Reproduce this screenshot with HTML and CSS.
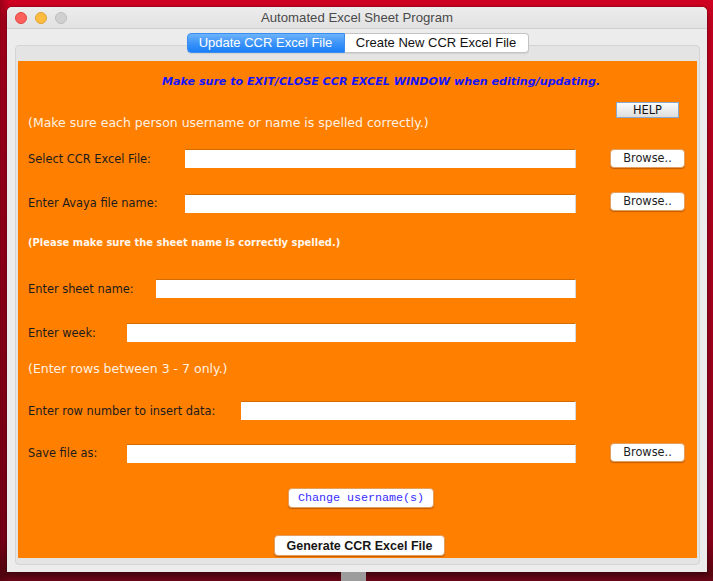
FILE: index.html
```html
<!DOCTYPE html>
<html>
<head>
<meta charset="utf-8">
<title>Automated Excel Sheet Program</title>
<link rel="stylesheet" href="styles.css">
</head>
<body>
<div class="desk">
  <div class="window">
    <div class="titlebar">
      <div class="lights">
        <span class="light red"></span>
        <span class="light yellow"></span>
        <span class="light gray"></span>
      </div>
      <div class="title">Automated Excel Sheet Program</div>
    </div>
    <div class="tabs">
      <div class="tab selected">Update CCR Excel File</div>
      <div class="tab">Create New CCR Excel File</div>
    </div>
    <div class="tabbox">
      <div class="panel">
        <div class="warn">Make sure to EXIT/CLOSE CCR EXCEL WINDOW when editing/updating.</div>
        <div class="helprow"><button class="help">HELP</button></div>
        <div class="note note1">(Make sure each person username or name is spelled correctly.)</div>

        <div class="row r1 w157">
          <span class="label">Select CCR Excel File:</span>
          <span class="field"></span>
          <span class="trail"><button class="browse">Browse..</button></span>
        </div>
        <div class="row r2 w157 tall">
          <span class="label">Enter Avaya file name:</span>
          <span class="field low"></span>
          <span class="trail"><button class="browse high">Browse..</button></span>
        </div>

        <div class="note bold note2">(Please make sure the sheet name is correctly spelled.)</div>

        <div class="row r3 w128">
          <span class="label">Enter sheet name:</span>
          <span class="field"></span>
          <span class="trail"></span>
        </div>
        <div class="row r4 w99">
          <span class="label">Enter week:</span>
          <span class="field"></span>
          <span class="trail"></span>
        </div>

        <div class="note note3">(Enter rows between 3 - 7 only.)</div>

        <div class="row r5 w213">
          <span class="label">Enter row number to insert data:</span>
          <span class="field"></span>
          <span class="trail"></span>
        </div>
        <div class="row r6 w99 mid">
          <span class="label">Save file as:</span>
          <span class="field low"></span>
          <span class="trail"><button class="browse high">Browse..</button></span>
        </div>

        <div class="centerrow change-row"><button class="change">Change username(s)</button></div>
        <div class="centerrow gen-row"><button class="generate">Generate CCR Excel File</button></div>
      </div>
    </div>
  </div>
  <div class="stand"></div>
</div>
</body>
</html>
```

FILE: styles.css
```css
* { box-sizing: border-box; }
html, body { margin: 0; padding: 0; }
body {
  width: 713px;
  height: 581px;
  overflow: hidden;
  font-family: "Liberation Sans", Arial, sans-serif;
  background:
    linear-gradient(90deg, rgba(60,0,10,0.35) 0px, rgba(60,0,10,0) 10px),
    linear-gradient(180deg, #d10022 0px, #c4001f 20px, #a3001c 300px, #8a0019 540px, #5a0712 575px, #6a0818 581px);
}
.desk { position: relative; width: 713px; height: 581px; padding: 7px 6px 0 7px; }
.window {
  width: 700px;
  height: 565px;
  background: #ececec;
  border-radius: 5px 5px 0 0;
  box-shadow: 0 0 0 1px rgba(0,0,0,0.12), 0 2px 6px rgba(0,0,0,0.35);
  display: flex;
  flex-direction: column;
  overflow: hidden;
}
.titlebar {
  height: 22px;
  flex: none;
  background: linear-gradient(180deg, #ececec 0%, #e2e2e2 100%);
  border-bottom: 1px solid #d0d0d0;
  display: flex;
  align-items: center;
  position: relative;
}
.lights { display: flex; gap: 8px; padding-left: 8px; }
.light { width: 12px; height: 12px; border-radius: 50%; display: block; }
.light.red { background: #fc605c; border: 1px solid #e2463f; }
.light.yellow { background: #fdbc40; border: 1px solid #dea236; }
.light.gray { background: #d0d0d0; border: 1px solid #bdbdbd; }
.title {
  position: absolute;
  left: 0; right: 0; top: 0; bottom: 0;
  text-align: center;
  line-height: 22px;
  font-size: 13.2px;
  color: #4a4a4a;
}
.tabs {
  display: flex;
  justify-content: center;
  margin-top: 4px;
  margin-bottom: -8px;
  position: relative;
  z-index: 2;
  padding-left: 1px;
}
.tab {
  height: 20px;
  line-height: 18px;
  font-size: 13px;
  border: 1px solid #c3c3c3;
  background: #fff;
  color: #111;
  box-shadow: 0 1px 1px rgba(0,0,0,0.08);
}
.tab.selected {
  width: 158px;
  text-align: center;
  color: #fff;
  background: linear-gradient(180deg, #6db3fb 0%, #3d94f8 50%, #1b7ff8 100%);
  border-color: #3a8ef0;
  border-radius: 4px 0 0 4px;
}
.tab:not(.selected) {
  width: 184px;
  text-align: center;
  border-left: none;
  border-radius: 0 4px 4px 0;
}
.tabbox {
  margin: 0 7px 0 8px;
  height: 520px;
  border: 1px solid #d4d4d4;
  border-radius: 4px;
  background: #e4e4e4;
  padding: 15px 1px 0 2px;
}
.panel {
  width: 679px;
  height: 497px;
  background: #ff7f00;
  padding-left: 10px;
  display: flex;
  flex-direction: column;
  font-family: "DejaVu Sans", Verdana, sans-serif;
}
.warn {
  margin-top: 13px;
  height: 16px;
  line-height: 16px;
  padding-left: 134px;
  font-size: 11.1px;
  font-weight: bold;
  font-style: italic;
  color: #1414ff;
  white-space: nowrap;
}
.helprow {
  margin-top: 12px;
  height: 16px;
  display: flex;
  justify-content: flex-end;
  padding-right: 18px;
}
.help {
  width: 63px;
  height: 16px;
  padding: 0;
  font-family: "DejaVu Sans", Verdana, sans-serif;
  font-size: 11.4px;
  line-height: 14px;
  color: #111;
  background: linear-gradient(180deg, #fbfbfb 0%, #ececec 50%, #dedede 100%);
  border: 1px solid #86a8cf;
}
.note {
  height: 14px;
  line-height: 14px;
  font-size: 12.5px;
  color: #fff1e2;
  white-space: nowrap;
}
.note1 { margin-top: -2px; }
.note.bold { font-weight: bold; font-size: 9.95px; color: #fff6ec; }
.note2 { margin-top: 23px; }
.note3 { margin-top: 20px; }
.row {
  display: grid;
  grid-template-columns: var(--lw) 1fr 121px;
  height: 19px;
  align-items: center;
}
.row.tall { height: 21px; }
.row.mid { height: 20px; }
.w157 { --lw: 157px; }
.w128 { --lw: 128px; }
.w99 { --lw: 99px; }
.w213 { --lw: 213px; }
.r1 { margin-top: 19px; }
.r2 { margin-top: 24px; }
.r3 { margin-top: 29px; }
.r4 { margin-top: 25px; }
.r5 { margin-top: 25px; }
.r6 { margin-top: 23px; }
.label {
  font-size: 11.4px;
  color: #1c1c1c;
  white-space: nowrap;
}
.field {
  height: 19px;
  background: #fff;
  border-top: 1px solid #d06c00;
  border-right: 1px solid #d8d8d8;
  display: block;
}
.field.low { align-self: end; }
.trail { display: flex; height: 100%; align-items: center; padding-left: 34px; }
.browse.high { align-self: flex-start; }
.browse {
  width: 75px;
  height: 19px;
  padding: 0;
  font-family: "DejaVu Sans", Verdana, sans-serif;
  font-size: 11.4px;
  line-height: 17px;
  color: #1e1e1e;
  background: #fff;
  border: 1px solid #e2a060;
  border-radius: 4px;
  box-shadow: 0 1px 1px rgba(120,50,0,0.45);
}
.centerrow { display: flex; justify-content: center; }
.change-row { margin-top: 25px; height: 20px; padding-right: 3px; }
.gen-row { margin-top: 27px; height: 21px; padding-right: 6px; }
.change {
  width: 146px;
  height: 20px;
  padding: 0;
  font-family: "Liberation Mono", "Courier New", monospace;
  font-size: 11.7px;
  color: #3a2cff;
  background: #fff;
  border: 1px solid #e2a060;
  border-radius: 4px;
  box-shadow: 0 1px 1px rgba(120,50,0,0.45);
}
.generate {
  width: 171px;
  height: 21px;
  padding: 0;
  font-family: "Liberation Sans", Arial, sans-serif;
  font-weight: bold;
  font-size: 12.5px;
  color: #161616;
  background: #fff;
  border: 1px solid #e2a060;
  border-radius: 4px;
  box-shadow: 0 1px 1px rgba(120,50,0,0.45);
}
.stand {
  position: absolute;
  left: 341px;
  top: 572px;
  width: 25px;
  height: 9px;
  background: #9c9c9c;
}
```
